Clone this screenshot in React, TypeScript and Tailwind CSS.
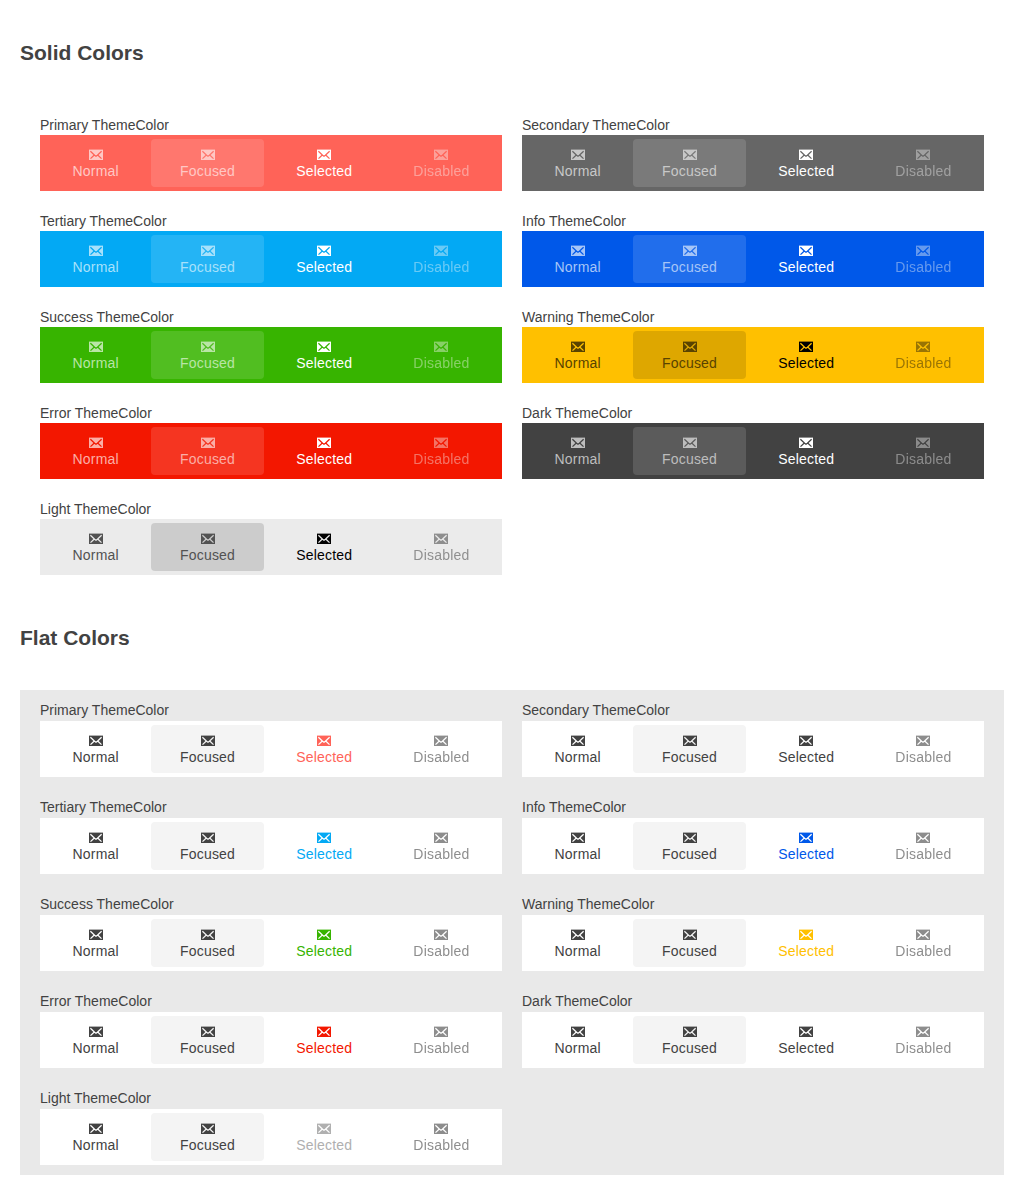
import { useId } from 'react';

type Tone = { name: string; bar: string; focus: string; text: string; muted: string; flat: string };

const tones: Tone[] = [
  { name: 'Primary', bar: 'bg-[#ff6358]', focus: 'bg-white/13', text: 'text-white', muted: 'text-[#ffc8c5]', flat: 'text-[#ff6358]' },
  { name: 'Secondary', bar: 'bg-[#666666]', focus: 'bg-white/13', text: 'text-white', muted: 'text-[#c8c8c8]', flat: 'text-[#424242]' },
  { name: 'Tertiary', bar: 'bg-[#03a9f4]', focus: 'bg-white/13', text: 'text-white', muted: 'text-[#a7e1fb]', flat: 'text-[#03a9f4]' },
  { name: 'Info', bar: 'bg-[#0058e9]', focus: 'bg-white/13', text: 'text-white', muted: 'text-[#a6c5f7]', flat: 'text-[#0058e9]' },
  { name: 'Success', bar: 'bg-[#37b400]', focus: 'bg-white/13', text: 'text-white', muted: 'text-[#b9e5a6]', flat: 'text-[#37b400]' },
  { name: 'Warning', bar: 'bg-[#ffc000]', focus: 'bg-black/13', text: 'text-black', muted: 'text-[#594300]', flat: 'text-[#ffc000]' },
  { name: 'Error', bar: 'bg-[#f31700]', focus: 'bg-white/13', text: 'text-white', muted: 'text-[#fbaea6]', flat: 'text-[#f31700]' },
  { name: 'Dark', bar: 'bg-[#424242]', focus: 'bg-white/13', text: 'text-white', muted: 'text-[#bdbdbd]', flat: 'text-[#424242]' },
  { name: 'Light', bar: 'bg-[#ebebeb]', focus: 'bg-black/13', text: 'text-black', muted: 'text-[#525252]', flat: 'text-[#b0b0b0]' },
];

const states = ['Normal', 'Focused', 'Selected', 'Disabled'];

function Envelope() {
  const id = useId();
  return (
    <svg viewBox="0 0 16 16" className="size-4" aria-hidden="true">
      <mask id={id} maskUnits="userSpaceOnUse" x="0" y="0" width="16" height="16">
        <rect width="16" height="16" fill="white" />
        <path
          d="M2.4 4.3 6.6 8.2 8 9.2 9.4 8.2 13.6 4.3M6.3 8 2.5 11.6M9.7 8l3.8 3.6"
          fill="none"
          stroke="black"
          strokeWidth="1.25"
        />
      </mask>
      <rect x="1" y="2.6" width="14" height="10.4" fill="currentColor" mask={`url(#${id})`} />
    </svg>
  );
}

function itemColor(tone: Tone, state: string, flat: boolean) {
  if (state === 'Selected') return flat ? tone.flat : tone.text;
  return flat ? 'text-[#424242]' : tone.muted;
}

function BottomNav({ tone, flat }: { tone: Tone; flat: boolean }) {
  return (
    <section className="p-2.5">
      <div className={flat ? 'leading-[21px]' : 'leading-5'}>{tone.name} ThemeColor</div>
      <nav className={`flex h-14 gap-1 p-1 ${flat ? 'bg-white' : tone.bar}`}>
        {states.map((state) => {
          const focus = state === 'Focused' ? (flat ? 'bg-[#f4f4f4]' : tone.focus) : '';
          const disabled = state === 'Disabled';
          return (
            <div
              key={state}
              className={`flex flex-auto flex-col items-center justify-center rounded tracking-[0.2px] ${itemColor(tone, state, flat)} ${focus} ${disabled ? 'opacity-60 grayscale-10' : ''}`}
            >
              <Envelope />
              <span className={`leading-4 ${disabled ? '-translate-y-[0.4px]' : ''}`}>{state}</span>
            </div>
          );
        })}
      </nav>
    </section>
  );
}

function Gallery({ flat = false }: { flat?: boolean }) {
  return (
    <div className={`mx-5 grid grid-cols-2 px-2.5 ${flat ? 'bg-[#e9e9e9]' : ''}`}>
      {tones.map((tone) => (
        <BottomNav key={tone.name} tone={tone} flat={flat} />
      ))}
    </div>
  );
}

export default function App() {
  return (
    <main className="h-[1194px] bg-white font-['Liberation_Sans',Arial,sans-serif] text-sm text-[#424242]">
      <h1 className="flex h-[105px] items-center px-5 text-[21px] font-bold">Solid Colors</h1>
      <Gallery />
      <h1 className="flex h-[105px] items-center px-5 text-[21px] font-bold">Flat Colors</h1>
      <Gallery flat />
    </main>
  );
}
